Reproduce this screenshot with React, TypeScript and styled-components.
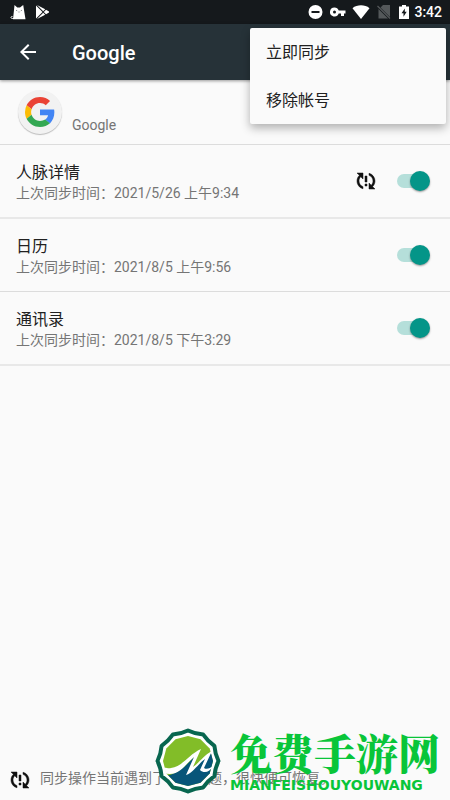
import React, { useState } from "react";
import styled, { createGlobalStyle } from "styled-components";

const GlobalStyle = createGlobalStyle`
  *, *::before, *::after { box-sizing: border-box; }
  body {
    margin: 0;
    background: #fafafa;
    color: #212121;
    font-family: Roboto, "Noto Sans CJK SC", sans-serif;
  }
  button { font: inherit; color: inherit; border: 0; padding: 0; background: none; cursor: pointer; }
`;

const Screen = styled.div`
  position: relative;
  display: flex;
  flex-direction: column;
  min-height: 100vh;
  overflow: hidden;
`;

const StatusBar = styled.div`
  display: flex;
  justify-content: space-between;
  height: 24px;
  padding: 0 8px;
  background: #15191c;
  color: #fff;
`;

const StatusGroup = styled.div<{ $gap: number }>`
  display: flex;
  align-items: center;
  gap: ${({ $gap }) => $gap}px;
`;

const Clock = styled.time`
  font-size: 14px;
  font-weight: 500;
  line-height: 24px;
`;

const Toolbar = styled.header`
  display: flex;
  align-items: center;
  gap: 32px;
  height: 56px;
  padding: 0 16px;
  background: #263238;
  color: #fff;
  box-shadow: 0 1px 3px rgba(0, 0, 0, 0.4);
`;

const BackButton = styled.button`
  display: flex;
  width: 24px;
  height: 24px;
`;

const Title = styled.h1`
  margin: 0;
  padding-top: 2px;
  font-size: 20px;
  font-weight: 500;
  line-height: 28px;
`;

const Account = styled.section`
  display: flex;
  align-items: flex-end;
  gap: 8px;
  height: 65px;
  padding: 0 16px 8px;
  border-bottom: 1px solid #dcdcdc;
`;

const Avatar = styled.div`
  display: flex;
  align-items: center;
  justify-content: center;
  width: 48px;
  height: 48px;
`;

const AvatarDisc = styled.div`
  display: flex;
  align-items: center;
  justify-content: center;
  width: 44px;
  height: 44px;
  border-radius: 50%;
  background: #f2f2f2;
  box-shadow: 0 1px 1px rgba(0, 0, 0, 0.25);
`;

const AccountName = styled.span`
  font-size: 14px;
  line-height: 22px;
  color: #757575;
`;

const List = styled.ul`
  margin: 0;
  padding: 0;
  list-style: none;
`;

const Row = styled.li`
  display: flex;
  align-items: center;
  gap: 16px;
  padding: 0 20px 0 16px;
  border-bottom: 1px solid #dcdcdc;

  &:nth-child(odd) {
    border-bottom: 2px solid #e8e8e8;
  }
`;

const RowLabel = styled.label`
  display: flex;
  flex: 1;
  flex-direction: column;
  justify-content: center;
  min-height: 72px;
  padding-top: 4px;
`;

const RowTitle = styled.span`
  font-size: 16px;
  line-height: 20px;
  color: #212121;
`;

const RowDetail = styled.span`
  font-size: 14px;
  line-height: 20px;
  color: #757575;
`;

const Switch = styled.input`
  appearance: none;
  display: flex;
  align-items: center;
  position: relative;
  width: 36px;
  height: 24px;
  margin: 0;
  cursor: pointer;

  &::after {
    content: "";
    position: absolute;
    left: 3px;
    width: 30px;
    height: 14px;
    border-radius: 7px;
    background: #c4c4c4;
  }
  &::before {
    content: "";
    z-index: 1;
    width: 20px;
    height: 20px;
    border-radius: 50%;
    background: #f1f1f1;
    box-shadow: 0 1px 2px rgba(0, 0, 0, 0.4);
  }
  &:checked::after {
    background: #b5dfda;
  }
  &:checked::before {
    margin-left: auto;
    background: #049588;
  }
`;

const Footer = styled.footer`
  display: flex;
  align-items: flex-end;
  gap: 8px;
  margin-top: auto;
  padding: 8px;
  color: #757575;
`;

const FooterText = styled.span`
  padding-bottom: 4px;
  font-size: 14px;
  line-height: 20px;
`;

const Menu = styled.div`
  position: absolute;
  top: 28px;
  right: 4px;
  z-index: 2;
  display: flex;
  flex-direction: column;
  width: 196px;
  border-radius: 2px;
  background: #fafafa;
  box-shadow: 0 4px 10px rgba(0, 0, 0, 0.3);
`;

const MenuItem = styled.button`
  height: 48px;
  padding: 0 16px 2px;
  font-size: 16px;
  text-align: left;
`;

const Brand = styled.aside`
  position: absolute;
  right: 10px;
  bottom: 6px;
  z-index: 1;
  display: flex;
  align-items: center;
  gap: 8px;
  color: #09c539;
  pointer-events: none;
`;

const BrandText = styled.div`
  display: flex;
  flex-direction: column;
  width: 210px;
  white-space: nowrap;
`;

const BrandName = styled.strong`
  font-family: "Noto Serif CJK SC", "Noto Sans CJK SC", serif;
  font-size: 42px;
  font-weight: 900;
  line-height: 48px;
`;

const BrandLatin = styled.span`
  font-family: "DejaVu Sans", sans-serif;
  font-size: 14px;
  font-weight: 700;
  line-height: 18px;
`;

function SyncProblem() {
  return (
    <svg width="24" height="24" viewBox="0 0 24 24" fill="#111" stroke="#111" strokeWidth=".5" aria-hidden="true">
      <path d="M3 12c0-2.210.910-4.200 2.360-5.640L3 4h6v6L6.760 7.760C5.680 8.850 5 10.340 5 12c0 2.610 1.670 4.830 4 5.650v2.090C5.550 18.850 3 15.730 3 12z" />
      <path d="M21 20h-6v-6l2.240 2.240C18.320 15.150 19 13.660 19 12c0-2.610-1.670-4.830-4-5.650V4.260c3.450.890 6 4.010 6 7.740 0 2.210-.910 4.200-2.360 5.640z" />
      <path d="M11 7h2v6h-2zM11 15h2v2h-2z" />
    </svg>
  );
}

function GoogleMark() {
  return (
    <svg width="30" height="30" viewBox="0 0 48 48" aria-hidden="true">
      <path fill="#EA4335" d="M24 9.5c3.54 0 6.71 1.22 9.21 3.6l6.85-6.85C35.9 2.38 30.47 0 24 0 14.62 0 6.51 5.38 2.56 13.22l7.98 6.19C12.43 13.72 17.74 9.5 24 9.5z" />
      <path fill="#4285F4" d="M46.98 24.55c0-1.57-.15-3.09-.38-4.55H24v9.02h12.94c-.58 2.96-2.26 5.48-4.78 7.18l7.73 6c4.51-4.18 7.09-10.36 7.09-17.65z" />
      <path fill="#FBBC05" d="M10.53 28.59A14.5 14.5 0 0 1 9.77 24c0-1.6.27-3.14.76-4.59l-7.98-6.19A23.9 23.9 0 0 0 0 24c0 3.88.92 7.54 2.56 10.78l7.97-6.19z" />
      <path fill="#34A853" d="M24 48c6.48 0 11.93-2.13 15.89-5.81l-7.73-6c-2.15 1.45-4.92 2.3-8.16 2.3-6.26 0-11.57-4.22-13.47-9.91l-7.98 6.19C6.51 42.62 14.62 48 24 48z" />
    </svg>
  );
}

function CatIcon() {
  return (
    <svg width="18" height="18" viewBox="0 0 18 18" aria-hidden="true">
      <path d="M5 16.200 6 7l.5-5 2.800 2.600h2.700L15.200 2 16 7l1.500 9.200z" fill="#fff" />
      <path d="M7 15.500H4.500C2 15.500 3 13 4.500 13.500" fill="none" stroke="#fff" strokeWidth="1" />
      <path d="M8.200 7.300l1 .5M13.800 7.300l-1 .5M10.500 9h1" stroke="#15191c" strokeWidth=".6" />
    </svg>
  );
}

function PlayIcon() {
  return (
    <svg width="16" height="16" viewBox="0 0 16 16" aria-hidden="true">
      <path d="M2 1.500v13l6.500-6.500zM3 1l6.200 6.200L11.200 5.300zM3 15l6.200-6.200 2 1.900zM12 5.800 9.800 8l2.200 2.200L15 8.600V7.400z" fill="#fff" />
    </svg>
  );
}

function StatusIcons() {
  return (
    <>
      <svg width="17" height="16" viewBox="0 0 17 16" fill="#fff" aria-hidden="true">
        <path fillRule="evenodd" d="M8.500 1a7 7 0 1 0 0 14 7 7 0 0 0 0-14zM4.500 7v2h8V7z" />
      </svg>
      <svg width="16" height="16" viewBox="0 0 16 16" fill="#fff" aria-hidden="true">
        <path fillRule="evenodd" d="M4.500 3.500a4.500 4.500 0 1 0 4.200 6H11V12h3V9.500h1.500v-3H8.700a4.500 4.500 0 0 0-4.200-3zm0 3a1.500 1.500 0 1 1 0 3 1.500 1.500 0 0 1 0-3z" />
      </svg>
      <svg width="18" height="16" viewBox="0 0 18 16" fill="#fff" aria-hidden="true">
        <path d="M9 15 .5 4.200C5 .4 13 .4 17.500 4.200z" />
      </svg>
      <svg width="16" height="16" viewBox="0 0 16 16" aria-hidden="true">
        <path d="M14 1v12L4.500 3.500 7 1zM2.500 5l9.500 9.500H2.500z" fill="#54585a" />
        <path d="M1.500 2 14 14.500" stroke="#54585a" strokeWidth="1.200" />
      </svg>
      <svg width="12" height="16" viewBox="0 0 12 16" aria-hidden="true">
        <path d="M4 1h4v1.500h3V15H1V2.500h3z" fill="#fff" />
        <path d="M6.800 4.500 3.500 9.300h2v3.500l3.200-5h-1.900z" fill="#15191c" />
      </svg>
    </>
  );
}

function BrandLogo() {
  return (
    <svg width="68" height="66" viewBox="0 0 68 66" aria-hidden="true">
      <defs>
        <clipPath id="brand-field">
          <path d="M34 8 46.500 11.300 55.700 20.500 59 33 55.700 45.500 46.500 54.700 34 58 21.500 54.700 12.300 45.500 9 33 12.300 20.500 21.500 11.300Z" />
        </clipPath>
      </defs>
      <path
        d="M34 2.500Q41.200 6 49.200 6.600Q53.800 13.200 60.400 17.800Q61 25.800 64.500 33Q61 40.200 60.400 48.200Q53.800 52.800 49.200 59.400Q41.200 60 34 63.500Q26.800 60 18.800 59.400Q14.200 52.800 7.600 48.200Q7 40.200 3.500 33Q7 25.800 7.600 17.800Q14.200 13.200 18.800 6.600Q26.800 6 34 2.500Z"
        fill="#fff"
        stroke="#08664f"
        strokeWidth="4"
        strokeLinejoin="round"
      />
      <g clipPath="url(#brand-field)">
        <path d="M8 7h52v52H8z" fill="#82bd28" />
        <path d="M8 48C24 48 33 36 43 26L38 41 57 25 62 22V60H8Z" fill="#075579" />
      </g>
      <path d="M8 41C11 38 13 41 17 40C28 39 34 27 47 21L39 39C45 35 49 28 58 23L50 40C53 42 56 40 59 38C56 44 50 46 46 42L51 31C44 36 39 45 32 47L40 29C30 37 25 50 9 45C13 44 11 41 8 41Z" fill="#fff" />
    </svg>
  );
}

const accounts = [
  { id: "people", title: "人脉详情", time: "2021/5/26 上午9:34", problem: true },
  { id: "calendar", title: "日历", time: "2021/8/5 上午9:56", problem: false },
  { id: "contacts", title: "通讯录", time: "2021/8/5 下午3:29", problem: false },
];

function SyncRow({ id, title, time, problem }: (typeof accounts)[number]) {
  const [enabled, setEnabled] = useState(true);
  return (
    <Row>
      <RowLabel htmlFor={id}>
        <RowTitle>{title}</RowTitle>
        <RowDetail>上次同步时间：{time}</RowDetail>
      </RowLabel>
      {problem && <SyncProblem />}
      <Switch id={id} type="checkbox" role="switch" checked={enabled} onChange={(e) => setEnabled(e.target.checked)} />
    </Row>
  );
}

export default function App() {
  return (
    <Screen lang="zh-CN">
      <GlobalStyle />
      <StatusBar>
        <StatusGroup $gap={8}>
          <CatIcon />
          <PlayIcon />
        </StatusGroup>
        <StatusGroup $gap={4}>
          <StatusGroup $gap={6}>
            <StatusIcons />
          </StatusGroup>
          <Clock>3:42</Clock>
        </StatusGroup>
      </StatusBar>
      <Toolbar>
        <BackButton aria-label="返回">
          <svg width="24" height="24" viewBox="0 0 24 24" fill="#fff" aria-hidden="true">
            <path d="M20 11H7.830l5.590-5.590L12 4l-8 8 8 8 1.410-1.410L7.830 13H20z" />
          </svg>
        </BackButton>
        <Title>Google</Title>
      </Toolbar>
      <Account>
        <Avatar>
          <AvatarDisc>
            <GoogleMark />
          </AvatarDisc>
        </Avatar>
        <AccountName>Google</AccountName>
      </Account>
      <List>
        {accounts.map((a) => (
          <SyncRow key={a.id} {...a} />
        ))}
      </List>
      <Footer>
        <SyncProblem />
        <FooterText>同步操作当前遇到了一些问题，很快便可恢复。</FooterText>
      </Footer>
      <Menu role="menu">
        <MenuItem role="menuitem">立即同步</MenuItem>
        <MenuItem role="menuitem">移除帐号</MenuItem>
      </Menu>
      <Brand>
        <BrandLogo />
        <BrandText>
          <BrandName>免费手游网</BrandName>
          <BrandLatin>MIANFEISHOUYOUWANG</BrandLatin>
        </BrandText>
      </Brand>
    </Screen>
  );
}
